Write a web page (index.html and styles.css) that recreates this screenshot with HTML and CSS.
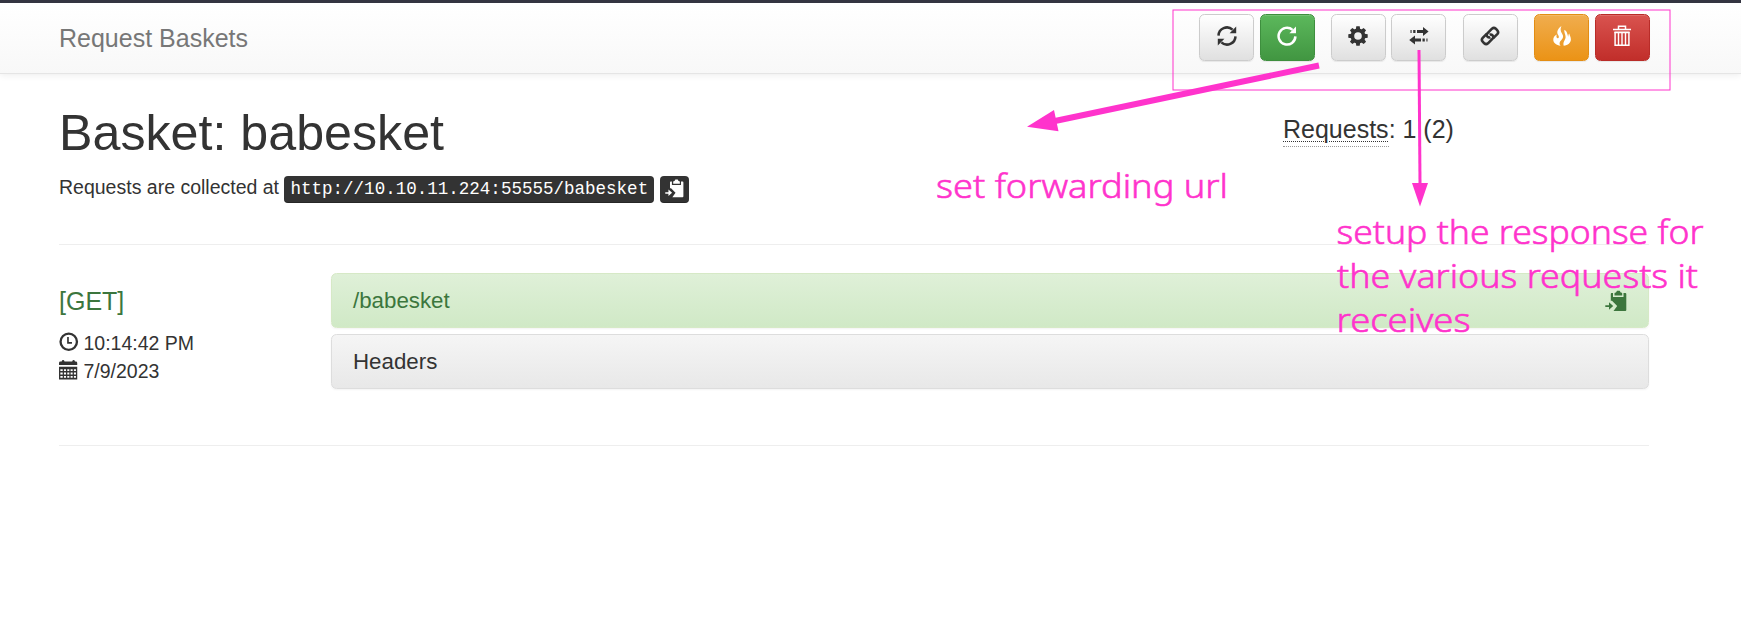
FILE: index.html
```html
<!DOCTYPE html>
<html lang="en">
<head>
<meta charset="utf-8">
<title>Request Baskets</title>
<link rel="stylesheet" href="styles.css">
</head>
<body>
<nav class="navbar">
  <a class="brand">Request Baskets</a>
  <div class="toolbar">
    <div class="group">
      <button class="btn"><svg class="icon" viewBox="0 0 20 20"><g fill="none" stroke="currentColor" stroke-width="2.5"><path d="M1.5 9.6A8.4 8.4 0 0 1 15.6 3.7"/><path d="M18.5 10.4A8.4 8.4 0 0 1 4.4 16.3"/></g><path fill="currentColor" d="M19.2 .6V7.2H12.6zM.8 19.4V12.8H7.4z"/></svg></button>
      <button class="btn green"><svg class="icon" viewBox="0 0 20 20"><path d="M15.6 3.9A8.4 8.4 0 1 0 18.4 10.4" fill="none" stroke="currentColor" stroke-width="2.5"/><path fill="currentColor" d="M19 .6V7.2H12.4z"/></svg></button>
    </div>
    <div class="group">
      <button class="btn"><svg class="icon" viewBox="0 0 20 20"><circle cx="10" cy="10" r="5.6" fill="none" stroke="currentColor" stroke-width="3.6"/><g fill="currentColor"><path id="cog" d="M7.8 3.5L8.3 .3H11.7L12.2 3.5zM7.8 16.5L8.3 19.7H11.7L12.2 16.5z"/><use href="#cog" transform="rotate(45 10 10)"/><use href="#cog" transform="rotate(90 10 10)"/><use href="#cog" transform="rotate(135 10 10)"/></g></svg></button>
      <button class="btn"><svg class="icon" viewBox="0 0 20 20"><path fill="currentColor" d="M14 1L19.6 5.5L14 10V7H8V4H14zM1.5 4H2.6V7H1.5zM4.2 4H6.5V7H4.2zM6 9.5L.2 14L6 18.5V15.5H12V12.5H6zM13.5 12.5H15.8V15.5H13.5zM17.4 12.5H18.5V15.5H17.4z"/></svg></button>
    </div>
    <div class="group">
      <button class="btn"><svg class="icon" viewBox="0 0 20 20"><g fill="none" stroke="currentColor" stroke-width="2.6" stroke-linejoin="round"><path d="M13.3 12.2L17.3 8.1Q19 6.2 17.3 4.3L15.8 2.7Q13.9 1 12 2.7L7.4 7.4Q5.9 9.1 7.5 10.7Q8.8 11.9 10.4 11.2"/><path d="M6.7 7.8L2.7 11.9Q1 13.8 2.7 15.7L4.2 17.3Q6.1 19 8 17.3L12.6 12.6Q14.1 10.9 12.5 9.3Q11.2 8.1 9.6 8.8"/></g></svg></button>
    </div>
    <div class="group">
      <button class="btn orange"><svg class="icon" viewBox="0 0 20 20"><path fill="currentColor" d="M9.4 0C5.8 2.5 4.2 6.2 6.2 9.1C7.4 10.9 6.8 12.5 5.6 12.2C4.2 11.8 4.2 9.8 4.8 8.4C2.5 9.6 1 11.6 1.3 14.2C1.6 17 4.4 19.2 8.6 19.7C6.8 18 7.4 15.8 9.2 14.2C11.6 12 11.6 9.6 10 7.4C8.4 5.2 8.2 2.5 9.4 0zM12.3 3.8C12 6.6 13.5 8.3 13.6 11C13.7 14 10.5 15.7 11.7 19.8C16 19.3 18.8 16.9 18.9 13.6C18.9 10.8 17.6 9.9 17.3 7.6C16.3 8.5 16.3 9.9 16.4 10.8C15.2 8.9 15.7 5.6 12.3 3.8z"/></svg></button>
      <button class="btn red"><svg class="icon trash" viewBox="0 0 20 22"><g fill="none" stroke="currentColor"><path stroke-width="1.5" d="M6.5 4V1.2H13.5V4M3.1 7V20.3H16.9V7"/><path stroke-width="1.7" d="M1 4.5H19M2.4 7.3H17.6"/><path stroke-width="1.4" d="M6.5 7V20M10 7V20M13.5 7V20"/></g></svg></button>
    </div>
  </div>
</nav>
<main class="container">
  <header class="heading">
    <div>
      <h1>Basket: babesket</h1>
      <p class="collect">Requests are collected at <kbd>http://10.10.11.224:55555/babesket</kbd> <kbd class="copy"><svg viewBox="0 0 22 22"><path fill="currentColor" d="M6.3 3H8V7H18.5V3H20.3Q21.3 3 21.3 4V20Q21.3 21 20.3 21H8.5L12.2 16L7 10.8H5.8V3.8zM9.5 3.3Q9.5 2.5 11 2.4L12 .7H14.7L15.7 2.4Q17.2 2.5 17.2 3.3V5.6H9.5zM.3 15.2H4V12.3L8.2 16L4 19.7V17H.3z"/></svg></kbd></p>
    </div>
    <h4 class="count"><abbr title="Current requests count (Total count)">Requests</abbr>: 1 (2)</h4>
  </header>
  <section class="request">
    <div class="meta">
      <h4>[GET]</h4>
      <div class="line"><svg viewBox="0 0 20 20"><circle cx="10" cy="10" r="8.4" fill="none" stroke="currentColor" stroke-width="2.4"/><path d="M9.2 5V11.2H13.3" fill="none" stroke="currentColor" stroke-width="1.7"/></svg><span>10:14:42 PM</span></div>
      <div class="line"><svg viewBox="0 0 20 20"><path fill="currentColor" fill-rule="evenodd" d="M0 5.2V3Q0 1.5 1.5 1.5H2.7Q3.2 0 4.2 0T5.7 1.5H13.5Q14 0 15 0T16.4 1.5H17.2Q18.7 1.5 18.7 3V5.2zM0 6.8H18.7V20H0zM1.4 9.6V11.4H3.8V9.6zM5.1 9.6V11.4H7.2V9.6zM8.5 9.6V11.4H10.6V9.6zM11.9 9.6V11.4H14V9.6zM15.3 9.6V11.4H17.4V9.6zM1.4 12.9V14.8H3.8V12.9zM5.1 12.9V14.8H7.2V12.9zM8.5 12.9V14.8H10.6V12.9zM11.9 12.9V14.8H14V12.9zM15.3 12.9V14.8H17.4V12.9zM1.4 16.3V18.2H3.8V16.3zM5.1 16.3V18.2H7.2V16.3zM8.5 16.3V18.2H10.6V16.3zM11.9 16.3V18.2H14V16.3zM15.3 16.3V18.2H17.4V16.3z"/></svg><span>7/9/2023</span></div>
    </div>
    <div class="panels">
      <div class="panel success"><span>/babesket</span><svg class="copy-icon" viewBox="0 0 22 22"><path fill="currentColor" d="M6.3 3H8V7H18.5V3H20.3Q21.3 3 21.3 4V20Q21.3 21 20.3 21H8.5L12.2 16L7 10.8H5.8V3.8zM9.5 3.3Q9.5 2.5 11 2.4L12 .7H14.7L15.7 2.4Q17.2 2.5 17.2 3.3V5.6H9.5zM.3 15.2H4V12.3L8.2 16L4 19.7V17H.3z"/></svg></div>
      <div class="panel"><span>Headers</span></div>
    </div>
  </section>
</main>
<svg class="notes" width="1741" height="617" viewBox="0 0 1741 617">
  <rect class="frame" x="1173" y="10" width="497" height="80"/>
  <path d="M1319 65.5L1055 121" stroke-width="6"/>
  <path class="head" d="M1027 126.7L1054 110L1058.5 131.3z"/>
  <path d="M1419 50L1420 184" stroke-width="3"/>
  <path class="head" d="M1412 183H1428L1420 206.5z"/>
  <text x="936" y="197.5" textLength="292" lengthAdjust="spacingAndGlyphs">set forwarding url</text>
  <text x="1336.5" y="243.5" textLength="367" lengthAdjust="spacingAndGlyphs">setup the response for</text>
  <text x="1337" y="287.5" textLength="361" lengthAdjust="spacingAndGlyphs">the various requests it</text>
  <text x="1336.5" y="331.5" textLength="134" lengthAdjust="spacingAndGlyphs">receives</text>
</svg>
</body>
</html>
```
FILE: styles.css
```css
* { box-sizing: border-box; }
body {
  margin: 0;
  height: 617px;
  overflow: hidden;
  background: #fff;
  color: #333;
  font: 19.5px/28px "Liberation Sans", Arial, sans-serif;
}
h1, h4, p { margin: 0; font-weight: 400; }
.navbar {
  height: 74px;
  padding: 11px 91.5px 0 59px;
  display: flex;
  justify-content: space-between;
  border-top: 3px solid #343541;
  border-bottom: 1px solid #e5e5e5;
  background: linear-gradient(#fff, #f8f8f8);
  box-shadow: 0 1px 7px rgba(0, 0, 0, .08);
}
.brand { color: #777; font-size: 25px; line-height: 48px; }
.toolbar { display: flex; gap: 16.3px; }
.group { display: flex; gap: 5.5px; }
.btn {
  width: 55px;
  height: 47px;
  padding: 0 0 3px;
  display: flex;
  align-items: center;
  justify-content: center;
  border: 1px solid #ccc;
  border-radius: 5.5px;
  background: linear-gradient(#fff, #e0e0e0);
  box-shadow: inset 0 1px 0 rgba(255, 255, 255, .15), 0 1px 1px rgba(0, 0, 0, .075);
  color: #333;
}
.green { border-color: #3e8f3e; background: linear-gradient(#5cb85c, #419641); color: #fff; }
.orange { border-color: #e38d13; background: linear-gradient(#f0ad4e, #eb9316); color: #fff; }
.red { border-color: #b92c28; background: linear-gradient(#d9534f, #c12e2a); color: #fff; }
.icon { width: 20px; height: 20px; }
.trash { height: 22px; }
.container { margin: 0 92px 0 59px; }
.heading {
  height: 171px;
  padding-top: 32px;
  display: flex;
  justify-content: space-between;
  border-bottom: 1px solid #eee;
}
h1 { font-size: 50.2px; line-height: 55px; }
.collect { margin-top: 12px; white-space: nowrap; }
kbd {
  display: inline-block;
  height: 27px;
  margin-top: 1px;
  padding: 0 6px;
  border-radius: 4px;
  background: #333;
  box-shadow: inset 0 -1px 0 rgba(0, 0, 0, .25);
  color: #fff;
  font: 17.55px/26px "Liberation Mono", monospace;
  vertical-align: middle;
}
.copy { padding: 3px 5px; }
.copy svg { display: block; width: 19px; height: 19px; }
h4 { font-size: 25px; line-height: 28px; }
.count { width: 366px; padding-top: 9px; }
abbr {
  display: inline-block;
  height: 32px;
  border-bottom: 1px dotted #999;
  text-decoration: underline dotted 1px;
  text-underline-offset: 3px;
}
.request {
  height: 201px;
  padding-top: 28px;
  display: flex;
  border-bottom: 1px solid #eee;
}
.meta { width: 272px; }
.meta h4 { padding-top: 14px; margin-bottom: 14px; color: #3c763d; }
.line { height: 28px; display: flex; gap: 5px; }
.line svg { width: 19.5px; height: 19.5px; margin-top: 3px; }
.panels { flex: 1; display: flex; flex-direction: column; gap: 6px; }
.panel {
  height: 55px;
  padding: 1px 21px 0;
  display: flex;
  align-items: center;
  justify-content: space-between;
  border: 1px solid #ddd;
  border-radius: 5.5px;
  background: linear-gradient(#f5f5f5, #e8e8e8);
  box-shadow: 0 1px 2px rgba(0, 0, 0, .05);
  font-size: 22.3px;
}
.success { border-color: #d6e9c6; background: linear-gradient(#dff0d8, #d0e9c6); color: #3c763d; }
.copy-icon { width: 22px; height: 22px; }
.notes { position: absolute; top: 0; left: 0; fill: none; stroke: #ff33cc; }
.notes .frame { stroke-width: 1; }
.notes .head { fill: #ff33cc; stroke: none; }
.notes text { fill: #ff33cc; stroke-width: .6; font: 300 33.5px "Noto Sans", sans-serif; }
```
